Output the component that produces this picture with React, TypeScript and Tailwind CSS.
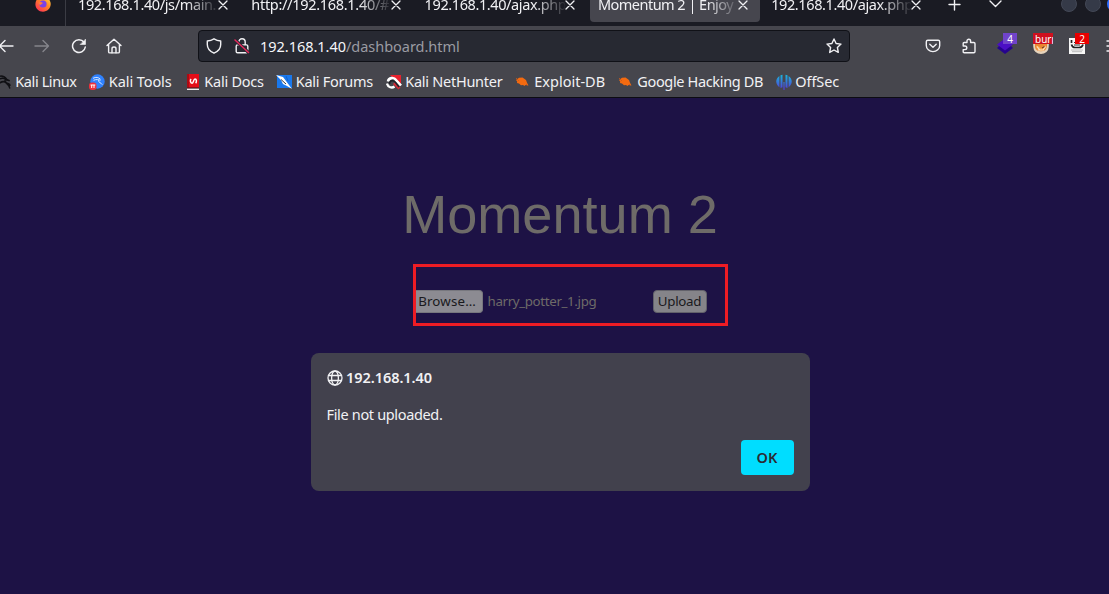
import React from "react";

const stroke = {
  fill: "none",
  stroke: "currentColor",
  strokeWidth: 1.4,
  strokeLinecap: "round" as const,
  strokeLinejoin: "round" as const,
};

const CloseIcon = () => (
  <svg className="size-[10px] shrink-0" viewBox="0 0 10 10" {...stroke} strokeWidth={1.3}>
    <path d="M1 1l8 8M9 1l-8 8" />
  </svg>
);

const Firefox = () => (
  <svg className="size-4" viewBox="0 0 16 16">
    <defs>
      <linearGradient id="ff" x1="1" y1="0" x2="0.2" y2="1">
        <stop offset="0" stopColor="#ffe14a" />
        <stop offset="0.45" stopColor="#ff8a25" />
        <stop offset="1" stopColor="#ff2f55" />
      </linearGradient>
    </defs>
    <path d="M8 .5C12.500 1 15.800 4 15.700 8.300 15.500 12.500 12.200 15.700 8 15.700S.4 12.500.4 8.200C.4 6 1.200 4 2.600 2.600L4 4.200z" fill="url(#ff)" />
    <circle cx="8" cy="8" r="3.600" fill="#7b42e8" />
    <path d="M3.500 6.500c2-1 3-.2 4.500.6-1 1.100-1.500.9-2.200 1.900C4.500 9 3.500 8 3.500 6.500z" fill="#ff7a3a" />
  </svg>
);

const BackIcon = () => (
  <svg className="size-4" viewBox="0 0 16 16" {...stroke}>
    <path d="M15 8H1.500M7 2.500L1.500 8 7 13.500" />
  </svg>
);

const ForwardIcon = () => (
  <svg className="size-4" viewBox="0 0 16 16" {...stroke}>
    <path d="M1 8h13.500M9 2.500L14.500 8 9 13.500" />
  </svg>
);

const ReloadIcon = () => (
  <svg className="size-4" viewBox="0 0 16 16" {...stroke} strokeWidth={1.5}>
    <path d="M13 4.200A6.400 6.400 0 1 0 14.300 9" />
    <path d="M14.500 1.500v5H9.500z" fill="currentColor" strokeWidth={0.6} />
  </svg>
);

const HomeIcon = () => (
  <svg className="size-4" viewBox="0 0 16 16" {...stroke}>
    <path d="M1 7.500L8 1.200l7 6.300M2.600 6.500v7.200c0 .8.4 1.200 1.200 1.200h8.400c.8 0 1.200-.4 1.200-1.200V6.500" />
    <path d="M6 14.700v-4c0-1 .7-1.700 2-1.700s2 .7 2 1.700v4" />
  </svg>
);

const ShieldIcon = () => (
  <svg className="size-4" viewBox="0 0 16 16" {...stroke}>
    <path d="M8 .8C6 2 4 2.700 1.300 3v3.500c0 4 2.700 7 6.700 8.700 4-1.700 6.700-4.700 6.700-8.700V3C12 2.700 10 2 8 .8z" />
  </svg>
);

const LockIcon = () => (
  <svg className="size-4" viewBox="0 0 16 16" {...stroke}>
    <path d="M4.800 6.800V4a3.200 3.200 0 0 1 6.400 0v2.800M3.500 6.900h9c.8 0 1.300.5 1.300 1.300v5.200c0 .8-.5 1.300-1.300 1.300h-9c-.8 0-1.300-.5-1.300-1.300V8.200c0-.8.5-1.300 1.300-1.300z" />
    <path d="M1 2l13.500 12.500" stroke="#272932" strokeWidth={3.2} />
    <path d="M1 2l13.500 12.500" stroke="#e3285b" strokeWidth={1.5} />
  </svg>
);

const StarIcon = () => (
  <svg className="size-4" viewBox="0 0 16 16" {...stroke}>
    <path d="M8 1l2.100 4.500 4.900.6-3.600 3.400.9 4.900L8 12l-4.300 2.400.9-4.900L1 6.100l4.900-.6z" />
  </svg>
);

const PocketIcon = () => (
  <svg className="size-4" viewBox="0 0 16 16" {...stroke}>
    <path d="M2.800 2.300h10.400c.9 0 1.500.6 1.500 1.500v3.600a6.700 6.200 0 0 1-13.400 0V3.800c0-.9.6-1.500 1.500-1.500z" />
    <path d="M4.800 6.200L8 9.300l3.200-3.100" />
  </svg>
);

const PuzzleIcon = () => (
  <svg className="size-4" viewBox="0 0 16 16" {...stroke}>
    <path d="M2.200 8V5.500c0-.6.4-1 1-1H6V3a1.800 1.800 0 0 1 3.600 0v1.500h3.200c.7 0 1.200.5 1.200 1.200v7.800c0 .7-.5 1.200-1.200 1.200H3.200c-.6 0-1-.4-1-1v-2.100H4a1.700 1.700 0 0 0 0-3.600z" />
  </svg>
);

const LayersIcon = () => (
  <svg className="size-4" viewBox="0 0 16 16">
    <path d="M0 10l3-3h10l3 3-8 6z" fill="#26048d" />
    <path d="M0 6.500l8-6 8 6-8 6z" fill="#4b0fc5" />
  </svg>
);

const FoxIcon = () => (
  <svg className="size-4" viewBox="0 0 16 16">
    <path d="M0 3h16l-.3 6A7.700 7 0 0 1 .3 9z" fill="#e6d3bb" />
    <path d="M2 3h12.500l-.7 6A6 5.300 0 0 1 2 9z" fill="#eb8530" />
    <path d="M3 7.500c2 0 4 1.500 5 3 1-2 3-3 5-3-.5 4-2.500 5.500-5 5.500S3.500 11.500 3 7.500z" fill="#f3a750" />
    <path d="M4 8.500l3 3.500h3l2.500-3.300M5 12h6" stroke="#fbe5ca" strokeWidth="1.1" fill="none" />
    <path d="M9 10l2.500-1.500" stroke="#743719" strokeWidth="1.1" />
  </svg>
);

const MaskIcon = () => (
  <svg className="size-4" viewBox="0 0 16 16">
    <path d="M0 0h16v16H0z" fill="#f7f7f7" />
    <path d="M2.500 2v3M2.500 6.500c.5 2 2 3 3.500 3h4c2 0 3.500-1 4-3" fill="none" stroke="#222" strokeWidth="1.7" />
    <path d="M5 7h6M5 4.500h2" stroke="#333" strokeWidth="1.2" />
    <path d="M2 12h12M3 13.700h10" stroke="#bbb" strokeWidth="1" />
  </svg>
);

const KaliLinux = () => (
  <svg className="size-4" viewBox="0 0 16 16" fill="none" stroke="#101014" strokeLinecap="round">
    <path d="M2 2.500c4-1 7 0 8.500 2.700M3 5C7 3.500 9 4.500 11 6M9.500 5c-1.500 3 .5 4.200 2.500 4.400 1.500.3 2 1 2 1.800M9.500 8c1.500 2.500 3.800 3 4.200 6" strokeWidth="1.5" />
    <path d="M10.500 5.700l2.500.8M4.500 8.500c2-1.500 3.500-1 5-.5" strokeWidth="1.800" />
  </svg>
);

const KaliTools = () => (
  <svg className="size-4" viewBox="0 0 16 16">
    <circle cx="8.500" cy="7.500" r="7.200" fill="#2f82ff" />
    <path d="M4 4.300c3-1.600 5.500-1 7.500 1M4.500 6.300c3-1.300 5-.6 7 0M9.500 6.200c0 3 2.500 2 3.800 4.500" fill="none" stroke="#d5e6ff" strokeWidth="1" />
    <rect x="0" y="8.500" width="7.500" height="7.500" rx="3" fill="#ed303b" />
    <path d="M1.500 11h4.800M2.700 11v3M5 11v3" stroke="#fff" strokeWidth="1" />
  </svg>
);

const KaliDocs = () => (
  <svg className="size-4" viewBox="0 0 16 16">
    <path d="M2 0h12v14H2z" fill="#e30d18" />
    <path d="M2 0h2v14H2z" fill="#a90c14" />
    <path d="M2 14.500h12V16H2z" fill="#eee" />
    <path d="M2 13.800h12" stroke="#65151c" />
    <path d="M6.200 5c-1.500 1-.8 4.200.8 4.200S8.300 5 10 5s1.800 3 .7 4.200" fill="none" stroke="#fff" strokeWidth="1.5" />
  </svg>
);

const KaliForums = () => (
  <svg className="size-4" viewBox="0 0 16 16">
    <path d="M1 1h15v13H1z" fill="#1978ed" />
    <path d="M0 1l7 2 3 4 6 8-5-3-4-2-2-4z" fill="#fff" />
    <path d="M5 5.500l5 4.500" stroke="#35383f" strokeWidth="1" />
    <path d="M10 2l2 5" stroke="#1361c8" />
  </svg>
);

const KaliNetHunter = () => (
  <svg className="size-4" viewBox="0 0 16 16">
    <path d="M4 1h11v11z" fill="#e8222e" />
    <path d="M13.500 14.500L8 9" stroke="#d62c38" strokeWidth="3" />
    <path d="M2 7.500c.5-4 6-4.500 8-1.500l5 5.500" fill="none" stroke="#fff" strokeWidth="2.600" />
    <path d="M1 9.500c1 4 5 5 7.500 3" fill="none" stroke="#fff" strokeWidth="2.300" />
    <path d="M3.500 10c0-4 4-4 6-1.500l3.500 4.500" fill="none" stroke="#1f2026" strokeWidth="1.400" />
  </svg>
);

const Exploit = () => (
  <svg className="size-4" viewBox="0 0 16 16" fill="#f36a10">
    <path d="M1 6l3-2.200 3.500-.3L11 6l1 2.700 1.500 2.800-3-.6-1 1.100L8 11l-2 .3L4 9.500 2 9l.2-1.500z" />
    <path d="M1 4l3 3M11 10l1.500 1.500" stroke="#c8591d" strokeWidth=".8" />
  </svg>
);

const OffSec = () => (
  <svg className="size-4" viewBox="0 0 16 16">
    <defs>
      <linearGradient id="os" x1="0" y1="0" x2="0" y2="1">
        <stop offset="0" stopColor="#18b7dc" />
        <stop offset="1" stopColor="#5536d9" />
      </linearGradient>
    </defs>
    <path d="M6.500.7v12.500L4.500 14V1.300zM3.400 2v11.300C-.8 10-.8 5 3.400 2zM9.500.7v12.500l2 .8V1.300zM12.600 2v11.300c4.200-3.300 4.200-8.300 0-11.300zM7.400 8h1.200v8H7.400z" fill="url(#os)" />
  </svg>
);

const GlobeIcon = () => (
  <svg className="size-4" viewBox="0 0 16 16" {...stroke} strokeWidth={1.3}>
    <circle cx="8" cy="8" r="7" />
    <ellipse cx="8" cy="8" rx="3.400" ry="7" />
    <path d="M1.500 5.500h13M1.500 10.500h13" />
  </svg>
);

const tabs = [
  { title: "192.168.1.40/js/main.", active: false, cls: "tracking-[-0.38px]" },
  { title: "http://192.168.1.40/#", active: false, cls: "tracking-[-0.3px]" },
  { title: "192.168.1.40/ajax.php", active: false, cls: "tracking-[-0.4px]" },
  { title: "Momentum 2 | Enjoy", active: true, cls: "tracking-[-0.52px]" },
  { title: "192.168.1.40/ajax.php", active: false, cls: "tracking-[-0.4px]" },
];

const bookmarks = [
  { label: "Kali Linux", icon: <KaliLinux />, cls: "w-[93.500px] tracking-[-0.4px]" },
  { label: "Kali Tools", icon: <KaliTools />, cls: "w-[95.500px] tracking-[-0.08px]" },
  { label: "Kali Docs", icon: <KaliDocs />, cls: "w-[91.500px] tracking-[-0.25px]" },
  { label: "Kali Forums", icon: <KaliForums />, cls: "w-[109.500px] tracking-[-0.27px]" },
  { label: "Kali NetHunter", icon: <KaliNetHunter />, cls: "w-[129px] tracking-[-0.27px]" },
  { label: "Exploit-DB", icon: <Exploit />, cls: "w-[103px]" },
  { label: "Google Hacking DB", icon: <Exploit />, cls: "w-[158px] tracking-[-0.35px]" },
  { label: "OffSec", icon: <OffSec />, cls: "w-[80px] tracking-[-0.1px]" },
];

function TabStrip() {
  return (
    <div className="flex h-[26px] overflow-hidden bg-[#1a1b23]">
      <div className="flex w-[70px] shrink-0">
        <div className="-mt-1 ml-[35px]"><Firefox /></div>
        <div className="ml-[14px] h-[26px] w-px bg-[#3b3c44]" />
      </div>
      {tabs.map((t, i) => (
        <div
          key={i}
          className={`-mt-3 mr-[3.300px] flex h-[34px] w-[170px] shrink-0 items-center rounded-[4px] pl-2 ${t.active ? "bg-[#46464e]" : ""}`}
        >
          <span className={`-mt-[2px] w-[140px] whitespace-nowrap [mask-image:linear-gradient(to_right,black_108px,transparent_142px)] ${t.cls}`}>
            {t.title}
          </span>
          <span className="-mt-[1px] flex"><CloseIcon /></span>
        </div>
      ))}
      <svg className="mt-[-2px] ml-[12px] size-[13px] shrink-0" viewBox="0 0 13 13" {...stroke}>
        <path d="M6.500 1v11M1 6.500h11" />
      </svg>
      <svg className="mt-[-3px] ml-[28px] size-[13px] shrink-0" viewBox="0 0 13 13" {...stroke}>
        <path d="M1 4l5.500 5.500L12 4" />
      </svg>
      <div className="mt-[-4px] ml-[59px] flex shrink-0 gap-2">
        <div className="size-4 rounded-full border border-[#434856] bg-[#353a48]" />
        <div className="size-4 rounded-full border border-[#434856] bg-[#353a48]" />
        <div className="-ml-[2px] size-4 rounded-full bg-[#2b6cff]" />
      </div>
    </div>
  );
}

function ExtensionButton({ icon, badge, color }: { icon: React.ReactNode; badge: string; color: string }) {
  return (
    <div className="relative size-4 shrink-0">
      {icon}
      <span className={`absolute -top-[5px] flex h-[11px] items-center overflow-hidden text-[10px] leading-none text-white ${color}`}>
        {badge}
      </span>
    </div>
  );
}

function Toolbar() {
  return (
    <div className="flex h-[40px] items-center">
      <div className="flex w-[198px] shrink-0 items-center gap-[20px]">
        <div className="-ml-[2px]"><BackIcon /></div>
        <div className="text-[#85858b]"><ForwardIcon /></div>
        <div className="ml-px"><ReloadIcon /></div>
        <div className="-ml-px"><HomeIcon /></div>
      </div>
      <div className="flex h-8 w-[652px] shrink-0 items-center rounded-[4px] border border-[#101117] bg-[#272932] pr-[7px] pl-[7px]">
        <ShieldIcon />
        <div className="ml-3"><LockIcon /></div>
        <div className="ml-[10px] flex-1 tracking-[-0.03px] whitespace-nowrap text-[#f6f6f9]">
          192.168.1.40<span className="text-[#9a9ba2]">/dashboard.html</span>
        </div>
        <StarIcon />
      </div>
      <div className="ml-[75px] flex shrink-0 items-center">
        <PocketIcon />
        <div className="ml-5"><PuzzleIcon /></div>
        <div className="ml-5"><ExtensionButton icon={<LayersIcon />} badge="4" color="left-[6px] w-[14px] justify-center bg-[#7044ca]" /></div>
        <div className="ml-5"><ExtensionButton icon={<FoxIcon />} badge="burp" color="left-0 w-5 justify-start pl-[2px] bg-[#cf101e]" /></div>
        <div className="ml-5"><ExtensionButton icon={<MaskIcon />} badge="2" color="left-[6px] w-[14px] justify-center bg-[#e90000]" /></div>
        <svg className="ml-[21px] h-4 w-4 shrink-0" viewBox="0 0 16 16" {...stroke}>
          <path d="M1 3h14M1 8h14M1 13h14" />
        </svg>
      </div>
    </div>
  );
}

function Bookmarks() {
  return (
    <div className="-ml-[4.500px] flex h-[31px] items-center">
      {bookmarks.map((b) => (
        <div key={b.label} className={`flex shrink-0 items-center gap-[3.800px] whitespace-nowrap ${b.cls}`}>
          {b.icon}
          <span className="-mt-[2px]">{b.label}</span>
        </div>
      ))}
    </div>
  );
}

export default function App() {
  return (
    <div className="flex h-[594px] w-[1109px] flex-col overflow-hidden bg-[#1d1245] font-['Noto_Sans',sans-serif] text-[14.500px] leading-5 text-[#f1f1f4]">
      <TabStrip />
      <div className="h-[72px] shrink-0 overflow-hidden border-b border-[#0c0c12] bg-[#46464d]">
        <Toolbar />
        <Bookmarks />
      </div>
      <main className="flex flex-1 flex-col items-center pl-[11px]">
        <h1 className="mt-[85px] h-[62px] font-['Liberation_Sans',sans-serif] text-[54.100px] leading-[62px] whitespace-nowrap text-[#6e6b68]">
          Momentum 2
        </h1>
        <div className="mt-[19px] ml-5 flex h-[62px] w-[315px] items-center border-3 border-[#ed1c24] pt-[12px] text-[13.333px]">
          <button className="h-[23px] w-[67px] rounded-r-[4px] border border-l-0 border-[#77777e] bg-[#8c8b92] pr-[3px] pb-0 tracking-[0.15px] whitespace-nowrap text-[#19191d]">Browse…</button>
          <span className="ml-[5px] w-[170px] tracking-[-0.36px] whitespace-nowrap text-[#6e6b68]">harry_potter_1.jpg</span>
          <button className="-ml-[5px] h-[23px] w-[54px] rounded-[4px] border border-[#62616a] bg-[#858489] tracking-[-0.3px] text-[#19191d]">Upload</button>
        </div>
        <section className="mt-[27px] flex h-[138px] w-[499px] flex-col rounded-[8px] bg-[#42414d] px-4 pt-[14px] pb-4">
          <div className="flex items-center gap-[3px] font-semibold tracking-[-0.05px]"><span className="mt-px ml-[0.500px]"><GlobeIcon /></span>192.168.1.40</div>
          <p className="mt-[17px] tracking-[-0.34px]">File not uploaded.</p>
          <button className="mt-auto h-[35px] w-[53px] self-end rounded-[4px] bg-[#00ddff] pb-[2px] font-semibold text-[#2b2a33]">OK</button>
        </section>
      </main>
    </div>
  );
}
